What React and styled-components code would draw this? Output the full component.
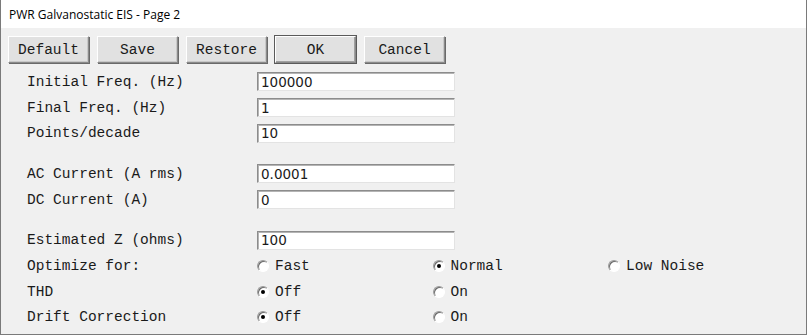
import React, { useState } from 'react';
import styled, { createGlobalStyle } from 'styled-components';

const GlobalStyle = createGlobalStyle`
  html, body {
    margin: 0;
    padding: 0;
    background: #f0f0f0;
  }
  * {
    box-sizing: border-box;
  }
`;

const buttons = ['Default', 'Save', 'Restore', 'OK', 'Cancel'];

const fields = [
  { label: 'Initial Freq. (Hz)', value: '100000' },
  { label: 'Final Freq. (Hz)', value: '1' },
  { label: 'Points/decade', value: '10' },
  { spacer: true },
  { label: 'AC Current (A rms)', value: '0.0001' },
  { label: 'DC Current (A)', value: '0' },
  { spacer: true },
  { label: 'Estimated Z (ohms)', value: '100' },
];

const radioGroups = [
  { label: 'Optimize for:', options: ['Fast', 'Normal', 'Low Noise'], selected: 'Normal' },
  { label: 'THD', options: ['Off', 'On'], selected: 'Off' },
  { label: 'Drift Correction', options: ['Off', 'On'], selected: 'Off' },
];

function App() {
  const [choices, setChoices] = useState(
    Object.fromEntries(radioGroups.map((g) => [g.label, g.selected]))
  );
  return (
    <>
      <GlobalStyle />
      <Window>
        <TitleBar>PWR Galvanostatic EIS - Page 2</TitleBar>
        <Body>
          <Toolbar>
            {buttons.map((b) => (
              <Button key={b} $primary={b === 'OK'}>
                {b}
              </Button>
            ))}
          </Toolbar>
          <Form>
            {fields.map((f, i) =>
              f.spacer ? (
                <Spacer key={i} />
              ) : (
                <Row key={f.label}>
                  <Label>{f.label}</Label>
                  <Field defaultValue={f.value} />
                </Row>
              )
            )}
            {radioGroups.map((g) => (
              <Row key={g.label}>
                <Label>{g.label}</Label>
                <Options>
                  {g.options.map((o) => (
                    <Option
                      key={o}
                      onClick={() => setChoices({ ...choices, [g.label]: o })}
                    >
                      <RadioDot $checked={choices[g.label] === o} />
                      {o}
                    </Option>
                  ))}
                </Options>
              </Row>
            ))}
          </Form>
        </Body>
      </Window>
    </>
  );
}

export default App;

const Window = styled.div`
  width: 807px;
  height: 335px;
  display: flex;
  flex-direction: column;
  border: 1px solid #7a7a7a;
  border-top: none;
  background: #f0f0f0;
`;
const TitleBar = styled.div`
  height: 28px;
  flex-shrink: 0;
  display: flex;
  align-items: center;
  padding-left: 8px;
  padding-top: 1px;
  background: #ffffff;
  font-family: 'Open Sans', 'Liberation Sans', sans-serif;
  font-size: 12px;
  color: #000;
`;
const Body = styled.div`
  flex: 1;
  padding: 8px 0 0 7px;
`;
const Toolbar = styled.div`
  display: flex;
  gap: 8px;
`;
const Button = styled.button`
  width: 81px;
  height: 27px;
  padding: 0;
  background: #e1e1e1;
  border: 1px solid;
  border-color: #ffffff #8a8a8a #8a8a8a #ffffff;
  box-shadow: ${(p) =>
    p.$primary
      ? '0 0 0 1px #5a5a5a, inset -1px -1px 0 #a0a0a0'
      : '1px 1px 0 #6a6a6a, inset -1px -1px 0 #c8c8c8'};
  font-family: 'Liberation Mono', 'Courier New', monospace;
  font-size: 14.5px;
  color: #1a1a1a;
  cursor: pointer;
`;
const Form = styled.div`
  padding: 6px 0 0 19px;
`;
const Row = styled.div`
  display: flex;
  align-items: center;
  height: 25.7px;
`;
const Spacer = styled.div`
  height: 15px;
`;
const Label = styled.div`
  width: 230px;
  flex-shrink: 0;
  font-family: 'Liberation Mono', 'Courier New', monospace;
  font-size: 14.5px;
  color: #1a1a1a;
  white-space: pre;
`;
const Field = styled.input`
  width: 198px;
  height: 19px;
  padding: 0 0 0 3px;
  background: #ffffff;
  border: 1px solid;
  border-color: #8c8c8c #e3e3e3 #e3e3e3 #8c8c8c;
  box-shadow: inset 1px 1px 0 #b4b4b4;
  font-family: 'DejaVu Sans', 'Liberation Sans', sans-serif;
  font-size: 13.5px;
  color: #1a1a1a;
  outline: none;
`;
const Options = styled.div`
  display: grid;
  grid-template-columns: repeat(3, 175.5px);
`;
const Option = styled.label`
  display: flex;
  align-items: center;
  gap: 6px;
  font-family: 'Liberation Mono', 'Courier New', monospace;
  font-size: 14.5px;
  color: #1a1a1a;
  cursor: pointer;
`;
const RadioDot = styled.span`
  position: relative;
  width: 12px;
  height: 12px;
  flex-shrink: 0;
  border-radius: 50%;
  border: 1px solid;
  border-color: #9a9a9a #ffffff #ffffff #9a9a9a;
  background: #ffffff;
  box-shadow: inset 1px 1px 0 #6a6a6a;
  &::after {
    content: '';
    display: ${(p) => (p.$checked ? 'block' : 'none')};
    position: absolute;
    left: 3px;
    top: 3px;
    width: 4px;
    height: 4px;
    border-radius: 50%;
    background: #000;
  }
`;
